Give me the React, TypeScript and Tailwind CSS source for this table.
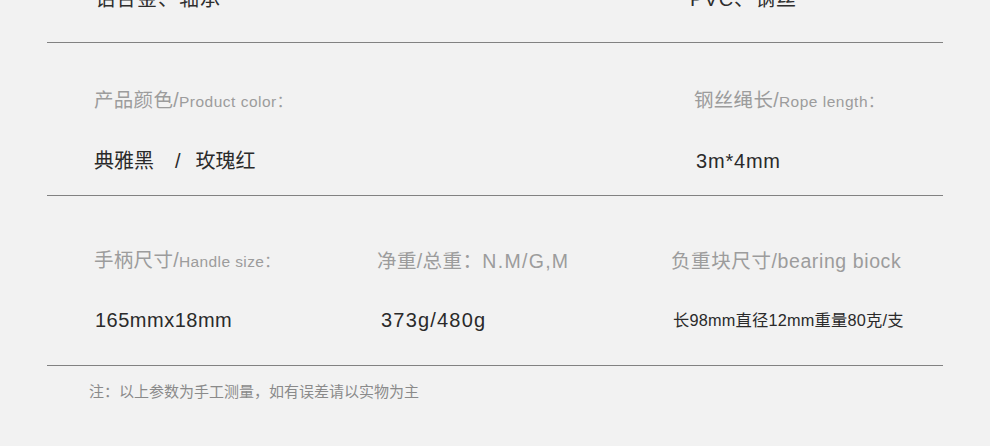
import React from "react";

const font = { fontFamily: '"Liberation Sans", "Noto Sans CJK SC", sans-serif' };

function Line() {
  return <div className="ml-[47px] w-[896px] h-px bg-[#828282] shrink-0" />;
}

export default function App() {
  return (
    <div
      className="w-[990px] h-[446px] bg-[#f2f2f2] overflow-hidden flex flex-col"
      style={font}
    >
      {/* cut-off top row */}
      <div className="h-[42px] shrink-0 flex text-[20px] leading-[20px] text-[#2e2e2e] tracking-[1px]">
        <div className="-mt-[11px] pl-[95px] w-[690px]">铝合金、轴承</div>
        <div className="-mt-[11px]">PVC、钢丝</div>
      </div>
      <Line />

      {/* row 1 */}
      <div className="h-[152px] shrink-0 flex flex-col pt-[48px]">
        <div className="flex h-[20px] items-center text-[#9c9c9c] leading-[20px]">
          <div className="pl-[94px] w-[694px] flex items-baseline">
            <span className="text-[19.5px] tracking-[0.3px]">产品颜色/</span>
            <span className="text-[15.5px] tracking-[0.5px]">Product color：</span>
          </div>
          <div className="flex items-baseline">
            <span className="text-[19.5px] tracking-[0.3px]">钢丝绳长/</span>
            <span className="text-[15.5px] tracking-[0.5px]">Rope length：</span>
          </div>
        </div>
        <div className="flex h-[20px] mt-[40px] items-center text-[#2a2a2a] text-[20px] leading-[20px]">
          <div className="pl-[94px] w-[696px] flex">
            <span>典雅黑</span>
            <span className="ml-[21px]">/</span>
            <span className="ml-[15px]">玫瑰红</span>
          </div>
          <div className="tracking-[0.8px]">3m*4mm</div>
        </div>
      </div>
      <Line />

      {/* row 2 */}
      <div className="h-[169px] shrink-0 flex flex-col pt-[55px]">
        <div className="flex h-[20px] items-center text-[#9c9c9c] leading-[20px]">
          <div className="pl-[94px] w-[377px] flex items-baseline">
            <span className="text-[19.5px] tracking-[0.3px]">手柄尺寸/</span>
            <span className="text-[15.5px] tracking-[0.4px]">Handle size：</span>
          </div>
          <div className="w-[294px] text-[19.5px] tracking-[0.4px]">
            净重/总重：<span className="tracking-[1.3px]">N.M/G,M</span>
          </div>
          <div className="text-[19.5px] tracking-[0.6px]">负重块尺寸/bearing biock</div>
        </div>
        <div className="flex h-[20px] mt-[39px] items-center text-[#2a2a2a] leading-[20px]">
          <div className="pl-[95px] w-[381px] text-[20px] tracking-[0.5px]">165mmx18mm</div>
          <div className="w-[292px] text-[20px] tracking-[1.2px]">373g/480g</div>
          <div className="text-[16.3px] tracking-[0.2px]">长98mm直径12mm重量80克/支</div>
        </div>
      </div>
      <Line />

      {/* note */}
      <div className="pt-[16px] pl-[89px] text-[15px] leading-[20px] text-[#8a8a8a]">
        注：以上参数为手工测量，如有误差请以实物为主
      </div>
    </div>
  );
}
